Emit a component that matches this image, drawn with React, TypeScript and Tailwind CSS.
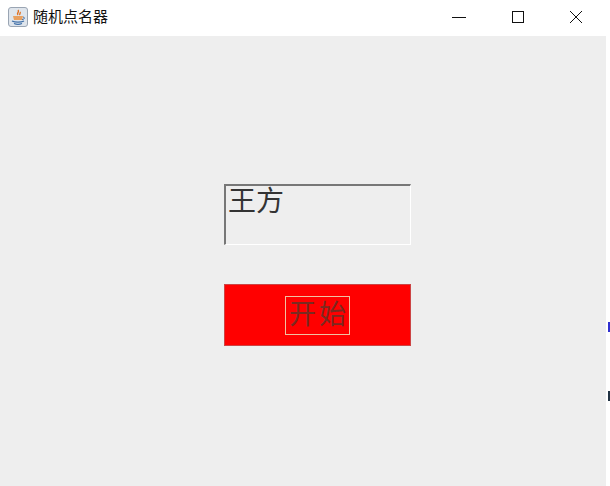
import React from 'react';

const cjk = "font-['Liberation_Serif','Noto_Sans_CJK_SC',serif]";

const JavaIcon = () => (
  <svg width="20" height="20" viewBox="0 0 20 20" className="shrink-0">
    <rect x="0.5" y="0.5" width="19" height="19" rx="2.5" fill="#dfe5ec" stroke="#9aa5b3" />
    <path d="M10 3c2 2-2 3 0 5M12 5c1 1-1 2 0 3" fill="none" stroke="#e07020" strokeWidth="1.4" />
    <path d="M5 9h10l-1 4H6z" fill="#e8a060" />
    <path d="M4 14c3 1.500 9 1.500 12 0M6 16.500c2 .8 6 .8 8 0" fill="none" stroke="#3f6fa8" strokeWidth="1.3" />
    <path d="M15 10c2 0 2 2.500-1 2.500" fill="none" stroke="#3f6fa8" />
  </svg>
);

const TitleBar = () => (
  <div className="flex h-[36px] items-center bg-white pb-[3px] pl-[8px]">
    <JavaIcon />
    <span className="ml-[5px] font-['Noto_Sans_CJK_SC',sans-serif] text-[15px] text-[#111]">随机点名器</span>
    <div className="ml-auto mr-[1px] flex items-center">
      <button className="flex h-[33px] w-[58px] items-center justify-center">
        <svg width="14" height="14" viewBox="0 0 14 14"><path d="M0 7.500h14" stroke="#111" /></svg>
      </button>
      <button className="flex h-[33px] w-[59px] items-center justify-center">
        <svg width="14" height="14" viewBox="0 0 14 14"><rect x="1.500" y="1.500" width="11" height="11" fill="none" stroke="#111" /></svg>
      </button>
      <button className="flex h-[33px] w-[58px] items-center justify-center">
        <svg width="14" height="14" viewBox="0 0 14 14"><path d="M1 1l12 12M13 1L1 13" stroke="#111" /></svg>
      </button>
    </div>
  </div>
);

export default function App() {
  return (
    <div className="flex h-[486px] w-[610px] overflow-hidden bg-white">
      <div className="flex w-[606px] flex-col bg-[#eeeeee]">
        <TitleBar />
        <div className="flex flex-col pl-[224px] pt-[148px]">
          <div className={`h-[61px] w-[187px] border border-t-2 border-l-2 border-t-[#777] border-l-[#777] border-r-white border-b-white bg-[#eeeeee] pl-[2px] text-[28px] leading-[32px] text-[#333] ${cjk}`}>
            王方
          </div>
          <div className="mt-[39px] flex h-[62px] w-[187px] items-center justify-center border border-[#c44] bg-[#ff0000]">
            <button className={`flex h-[39px] w-[65px] items-center justify-center border border-[#f0c0a0] pl-[3px] text-[27px] tracking-[3px] text-[#7a2a20] ${cjk}`}>
              开始
            </button>
          </div>
        </div>
      </div>
      <div className="flex w-[4px] flex-col bg-white pl-[2px] pt-[322px]">
        <div className="h-[10px] w-[2px] bg-[#3030d0]" />
        <div className="mt-[59px] h-[10px] w-[2px] bg-[#223344]" />
      </div>
    </div>
  );
}
